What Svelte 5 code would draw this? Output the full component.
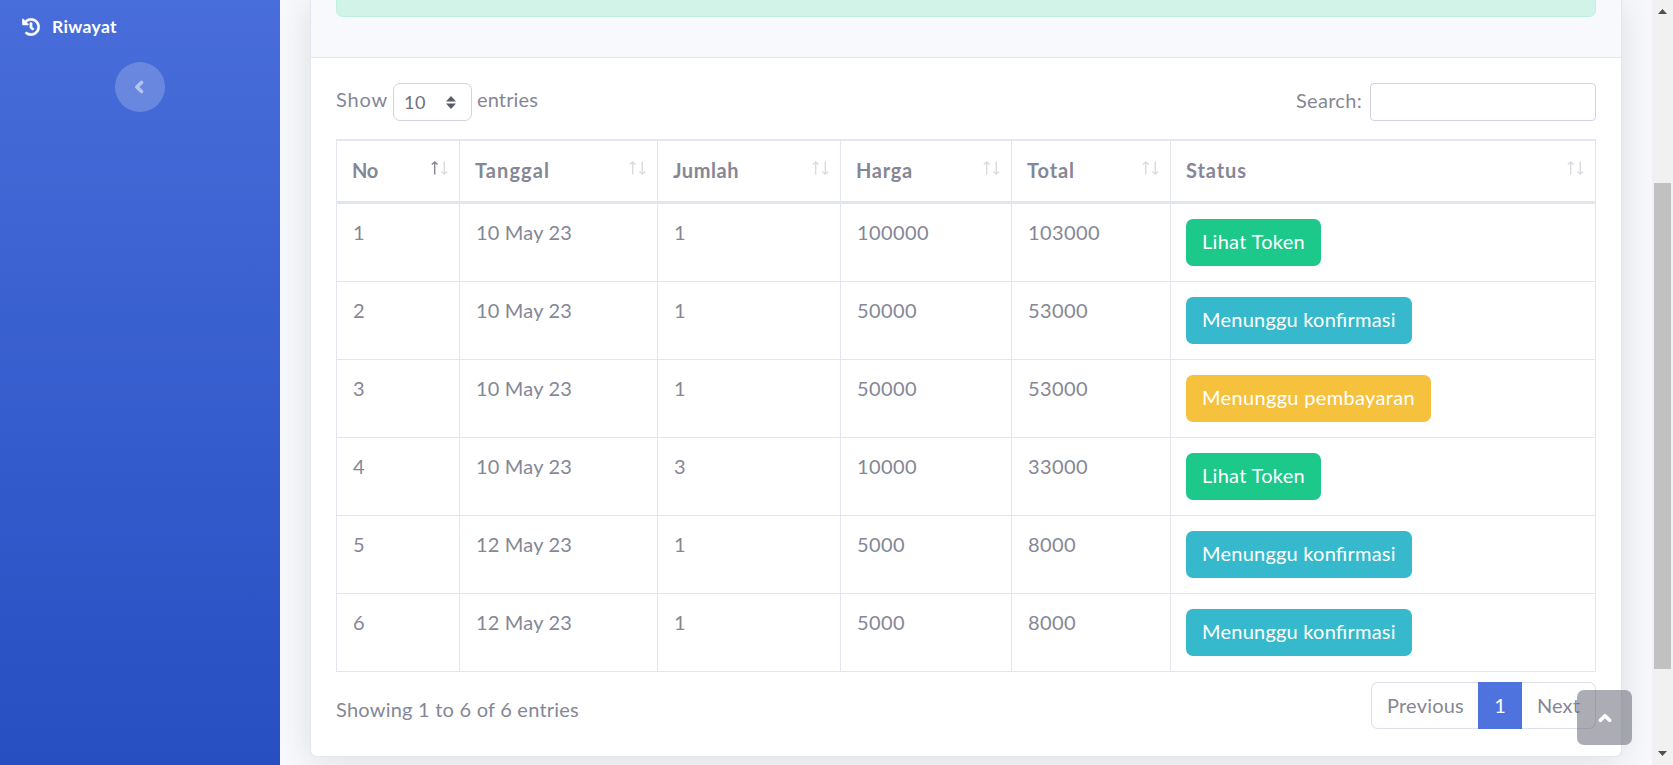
<script>
  const columns = [
    { label: 'No', width: 26 },
    { label: 'Tanggal', width: 75 },
    { label: 'Jumlah', width: 66 },
    { label: 'Harga', width: 57 },
    { label: 'Total', width: 48 },
    { label: 'Status', width: 61 }
  ];
  const token = { label: 'Lihat Token', kind: 'success', width: 103 };
  const confirm = { label: 'Menunggu konfirmasi', kind: 'info', width: 194 };
  const payment = { label: 'Menunggu pembayaran', kind: 'warning', width: 213 };
  const rows = [
    { cells: ['1', '10 May 23', '1', '100000', '103000'], status: token },
    { cells: ['2', '10 May 23', '1', '50000', '53000'], status: confirm },
    { cells: ['3', '10 May 23', '1', '50000', '53000'], status: payment },
    { cells: ['4', '10 May 23', '3', '10000', '33000'], status: token },
    { cells: ['5', '12 May 23', '1', '5000', '8000'], status: confirm },
    { cells: ['6', '12 May 23', '1', '5000', '8000'], status: confirm }
  ];

  // Spreads the letters of a label so that it takes up the given width.
  function track(node, width) {
    const own = node.getBoundingClientRect().width;
    node.style.letterSpacing = (width - own) / node.textContent.length + 'px';
  }
  const cellWidth = (text) => (text.includes('May') ? 96 : text.length * 12);
</script>

<div class="page">
  <nav class="sidebar">
    <a class="nav-link" href="#riwayat">
      <svg width="18" height="18" viewBox="0 0 512 512" fill="currentColor" stroke="currentColor" stroke-width="14" aria-hidden="true">
        <path d="M504 255.531c.253 136.64-111.18 248.372-247.82 248.468-59.015.042-113.223-20.53-155.822-54.911-11.077-8.94-11.905-25.541-1.839-35.607l11.267-11.267c8.609-8.609 22.353-9.551 31.891-1.984C173.062 425.135 212.781 440 256 440c101.705 0 184-82.311 184-184 0-101.705-82.311-184-184-184-48.814 0-93.149 18.969-126.068 49.932l50.754 50.754c10.08 10.08 2.941 27.314-11.313 27.314H24c-8.837 0-16-7.163-16-16V38.627c0-14.254 17.234-21.393 27.314-11.314l49.372 49.372C129.209 34.136 189.552 8 256 8c136.81 0 247.747 110.78 248 247.531zm-180.912 78.784l9.823-12.63c8.138-10.463 6.253-25.542-4.21-33.679L288 256.349V152c0-13.255-10.745-24-24-24h-16c-13.255 0-24 10.745-24 24v135.651l65.409 50.874c10.463 8.137 25.541 6.253 33.679-4.21z" />
      </svg>
      <span class="txt" use:track={65}>Riwayat</span>
    </a>
    <button class="toggle" aria-label="Toggle">
      <svg width="10" height="14" viewBox="0 0 10 14"><path d="M7.5 2.4 2.9 7l4.6 4.6" fill="none" stroke="currentColor" stroke-width="3.6" stroke-linecap="round" stroke-linejoin="round" /></svg>
    </button>
  </nav>

  <main class="content">
    <section class="card">
      <header class="card-head"><div class="alert"></div></header>
      <div class="card-body">
        <div class="tools">
          <label class="length">
            <span class="txt" use:track={52}>Show</span>
            <span class="select">
              <span class="txt" use:track={22}>10</span>
              <svg width="10" height="13" viewBox="0 0 10 13"><path d="M5 0 10 5.5H0zM5 13 0 7.5h10z" fill="#5a5c69" /></svg>
            </span>
            <span class="txt" use:track={61}>entries</span>
          </label>
          <label class="search">
            <span class="txt" use:track={66}>Search:</span>
            <input type="search" />
          </label>
        </div>

        <table>
          <colgroup><col class="c0" /><col class="c1" /><col class="c2" /><col class="c3" /><col class="c4" /><col /></colgroup>
          <thead>
            <tr>
              {#each columns as column, i}
                <th>
                  <div class="th">
                    <span class="txt" use:track={column.width}>{column.label}</span>
                    <svg class="sort" width="17" height="14" viewBox="0 0 17 14" fill="none" stroke="#858796" stroke-width="1.4">
                      <path d="M3.7 13.5V1.2M.8 3.6 3.7 1l2.9 2.6" opacity={i === 0 ? 1 : 0.3} />
                      <path d="M13.3.5v12.3M10.4 10.4l2.9 2.6 2.9-2.6" opacity=".3" />
                    </svg>
                  </div>
                </th>
              {/each}
            </tr>
          </thead>
          <tbody>
            {#each rows as row}
              <tr>
                {#each row.cells as cell}
                  <td class="value"><span class="txt" use:track={cellWidth(cell)}>{cell}</span></td>
                {/each}
                <td><button class="btn {row.status.kind}"><span class="txt" use:track={row.status.width}>{row.status.label}</span></button></td>
              </tr>
            {/each}
          </tbody>
        </table>

        <div class="foot">
          <div class="info"><span class="txt" use:track={243}>Showing 1 to 6 of 6 entries</span></div>
          <div class="pager">
            <span class="prev"><span class="txt" use:track={77}>Previous</span></span>
            <span class="current"><span class="txt">1</span></span>
            <span class="next"><span class="txt" use:track={43}>Next</span></span>
          </div>
        </div>
      </div>
    </section>
  </main>

  <div class="scrollbar">
    <svg width="9" height="5" viewBox="0 0 9 5"><path d="M4.5 0 9 5H0z" fill="#505050" /></svg>
    <div class="thumb"></div>
    <svg width="9" height="5" viewBox="0 0 9 5"><path d="M0 0h9L4.5 5z" fill="#505050" /></svg>
  </div>

  <a class="to-top" href="#top" aria-label="Top">
    <svg width="14" height="10" viewBox="0 0 14 10"><path d="M2.4 7.2 7 2.7l4.6 4.5" fill="none" stroke="#fff" stroke-width="3.7" stroke-linecap="round" stroke-linejoin="round" /></svg>
  </a>
</div>

<style>
  :global(body) {
    overflow: hidden;
  }
  .page,
  .page * {
    box-sizing: border-box;
  }
  .page {
    position: relative;
    display: flex;
    width: 100%;
    height: 765px;
    overflow: hidden;
    background: #f8f9fc;
    color: #858796;
    font: 400 20px/30px Lato, sans-serif;
    font-feature-settings: 'liga' 1;
  }
  .txt {
    display: inline-block;
    white-space: pre;
  }
  button {
    border: 0;
    font: inherit;
    color: inherit;
  }
  .sidebar {
    flex: none;
    display: flex;
    flex-direction: column;
    align-items: center;
    width: 280px;
    background: linear-gradient(180deg, #4e73df 10%, #224abe 100%) 0 -255px / 100% 1138px;
    color: #fff;
  }
  .nav-link {
    display: flex;
    align-items: center;
    gap: 12px;
    width: 100%;
    height: 62px;
    padding: 0 0 9px 22px;
    color: #fff;
    font-size: 17.5px;
    font-weight: 700;
    text-decoration: none;
  }
  .toggle {
    display: grid;
    place-items: center;
    width: 50px;
    height: 50px;
    padding: 0 2px 0 0;
    border-radius: 50%;
    background: rgba(255, 255, 255, 0.2);
    color: rgba(255, 255, 255, 0.5);
  }
  .content {
    flex: 1;
    padding: 0 30px;
    overflow: hidden;
  }
  .card {
    height: 757px;
    border: 1px solid #e3e6f0;
    border-top: 0;
    border-radius: 0 0 7px 7px;
    background: #fff;
    box-shadow: 0 3px 35px rgba(58, 59, 69, 0.15);
  }
  .card-head {
    height: 58px;
    padding: 0 25px;
    border-bottom: 1px solid #e3e6f0;
    background: #f8f9fc;
  }
  .alert {
    height: 17px;
    border: 1px solid #bff0de;
    border-top: 0;
    border-radius: 0 0 7px 7px;
    background: #d2f4e8;
  }
  .card-body {
    padding: 25px 25px 0;
  }
  .tools {
    display: flex;
    justify-content: space-between;
    height: 56px;
  }
  .length,
  .search {
    display: flex;
    height: 38px;
  }
  .length > .txt {
    padding-top: 1px;
  }
  .select {
    display: flex;
    align-items: center;
    justify-content: space-between;
    width: 79px;
    height: 38px;
    margin: 0 5px;
    padding: 0 15px 0 10px;
    border: 1px solid #d1d3e2;
    border-radius: 7px;
    color: #6e707e;
    font-size: 18px;
  }
  .select .txt {
    padding-bottom: 1px;
  }
  .search {
    gap: 8px;
  }
  .search > .txt {
    padding-top: 2px;
  }
  input {
    width: 226px;
    height: 38px;
    border: 1px solid #d1d3e2;
    border-radius: 4px;
    background: #fff;
  }
  table {
    width: 1260px;
    table-layout: fixed;
    border-spacing: 0;
    border-right: 1px solid #e3e6f0;
  }
  .c0 { width: 123px; }
  .c1 { width: 198px; }
  .c2 { width: 183px; }
  .c3 { width: 171px; }
  .c4 { width: 159px; }
  th {
    height: 65px;
    padding: 0 14px 0 15px;
    border: solid #e3e6f0;
    border-width: 2px 0 3px 1px;
    text-align: left;
  }
  .th {
    display: flex;
    align-items: center;
    justify-content: space-between;
    height: 60px;
  }
  .th .txt {
    padding-bottom: 2px;
  }
  .th .sort {
    flex: none;
    margin: 0 -3px 6px 0;
  }
  td {
    height: 78px;
    padding: 15px 0 15px 15px;
    border: solid #e3e6f0;
    border-width: 0 0 1px 1px;
    line-height: 30px;
    vertical-align: top;
  }
  .value {
    padding: 13px 0 0 16px;
  }
  .btn {
    display: flex;
    align-items: center;
    height: 47px;
    padding: 0 16px 4px;
    border-radius: 7px;
    color: #fff;
    line-height: 30px;
  }
  .success { background: #1cc88a; }
  .info.btn { background: #36b9cc; }
  .warning { background: #f6c23e; }
  .foot {
    display: flex;
    justify-content: space-between;
    padding-top: 10px;
  }
  .foot .info {
    padding-top: 12px;
  }
  .pager {
    display: flex;
    height: 47px;
  }
  .pager > span {
    display: flex;
    align-items: center;
    padding-bottom: 2px;
    border: 1px solid #dddfeb;
  }
  .pager > .prev {
    width: 107px;
    padding-left: 15px;
    border-right: 0;
    border-radius: 7px 0 0 7px;
  }
  .pager > .current {
    justify-content: center;
    width: 44px;
    border-color: #4e73df;
    background: #4e73df;
    color: #fff;
  }
  .pager > .next {
    width: 74px;
    padding-left: 15px;
    border-left: 0;
    border-radius: 0 7px 7px 0;
  }
  .scrollbar {
    flex: none;
    display: flex;
    flex-direction: column;
    align-items: center;
    width: 21px;
    padding: 9px 0;
    background: #f1f1f1;
  }
  .thumb {
    width: 17px;
    height: 486px;
    margin: 169px 0 82px;
    background: #c1c1c1;
  }
  .to-top {
    position: absolute;
    left: 1577px;
    top: 690px;
    display: grid;
    place-items: center;
    width: 55px;
    height: 55px;
    border-radius: 7px;
    background: rgba(90, 92, 105, 0.5);
  }
</style>
